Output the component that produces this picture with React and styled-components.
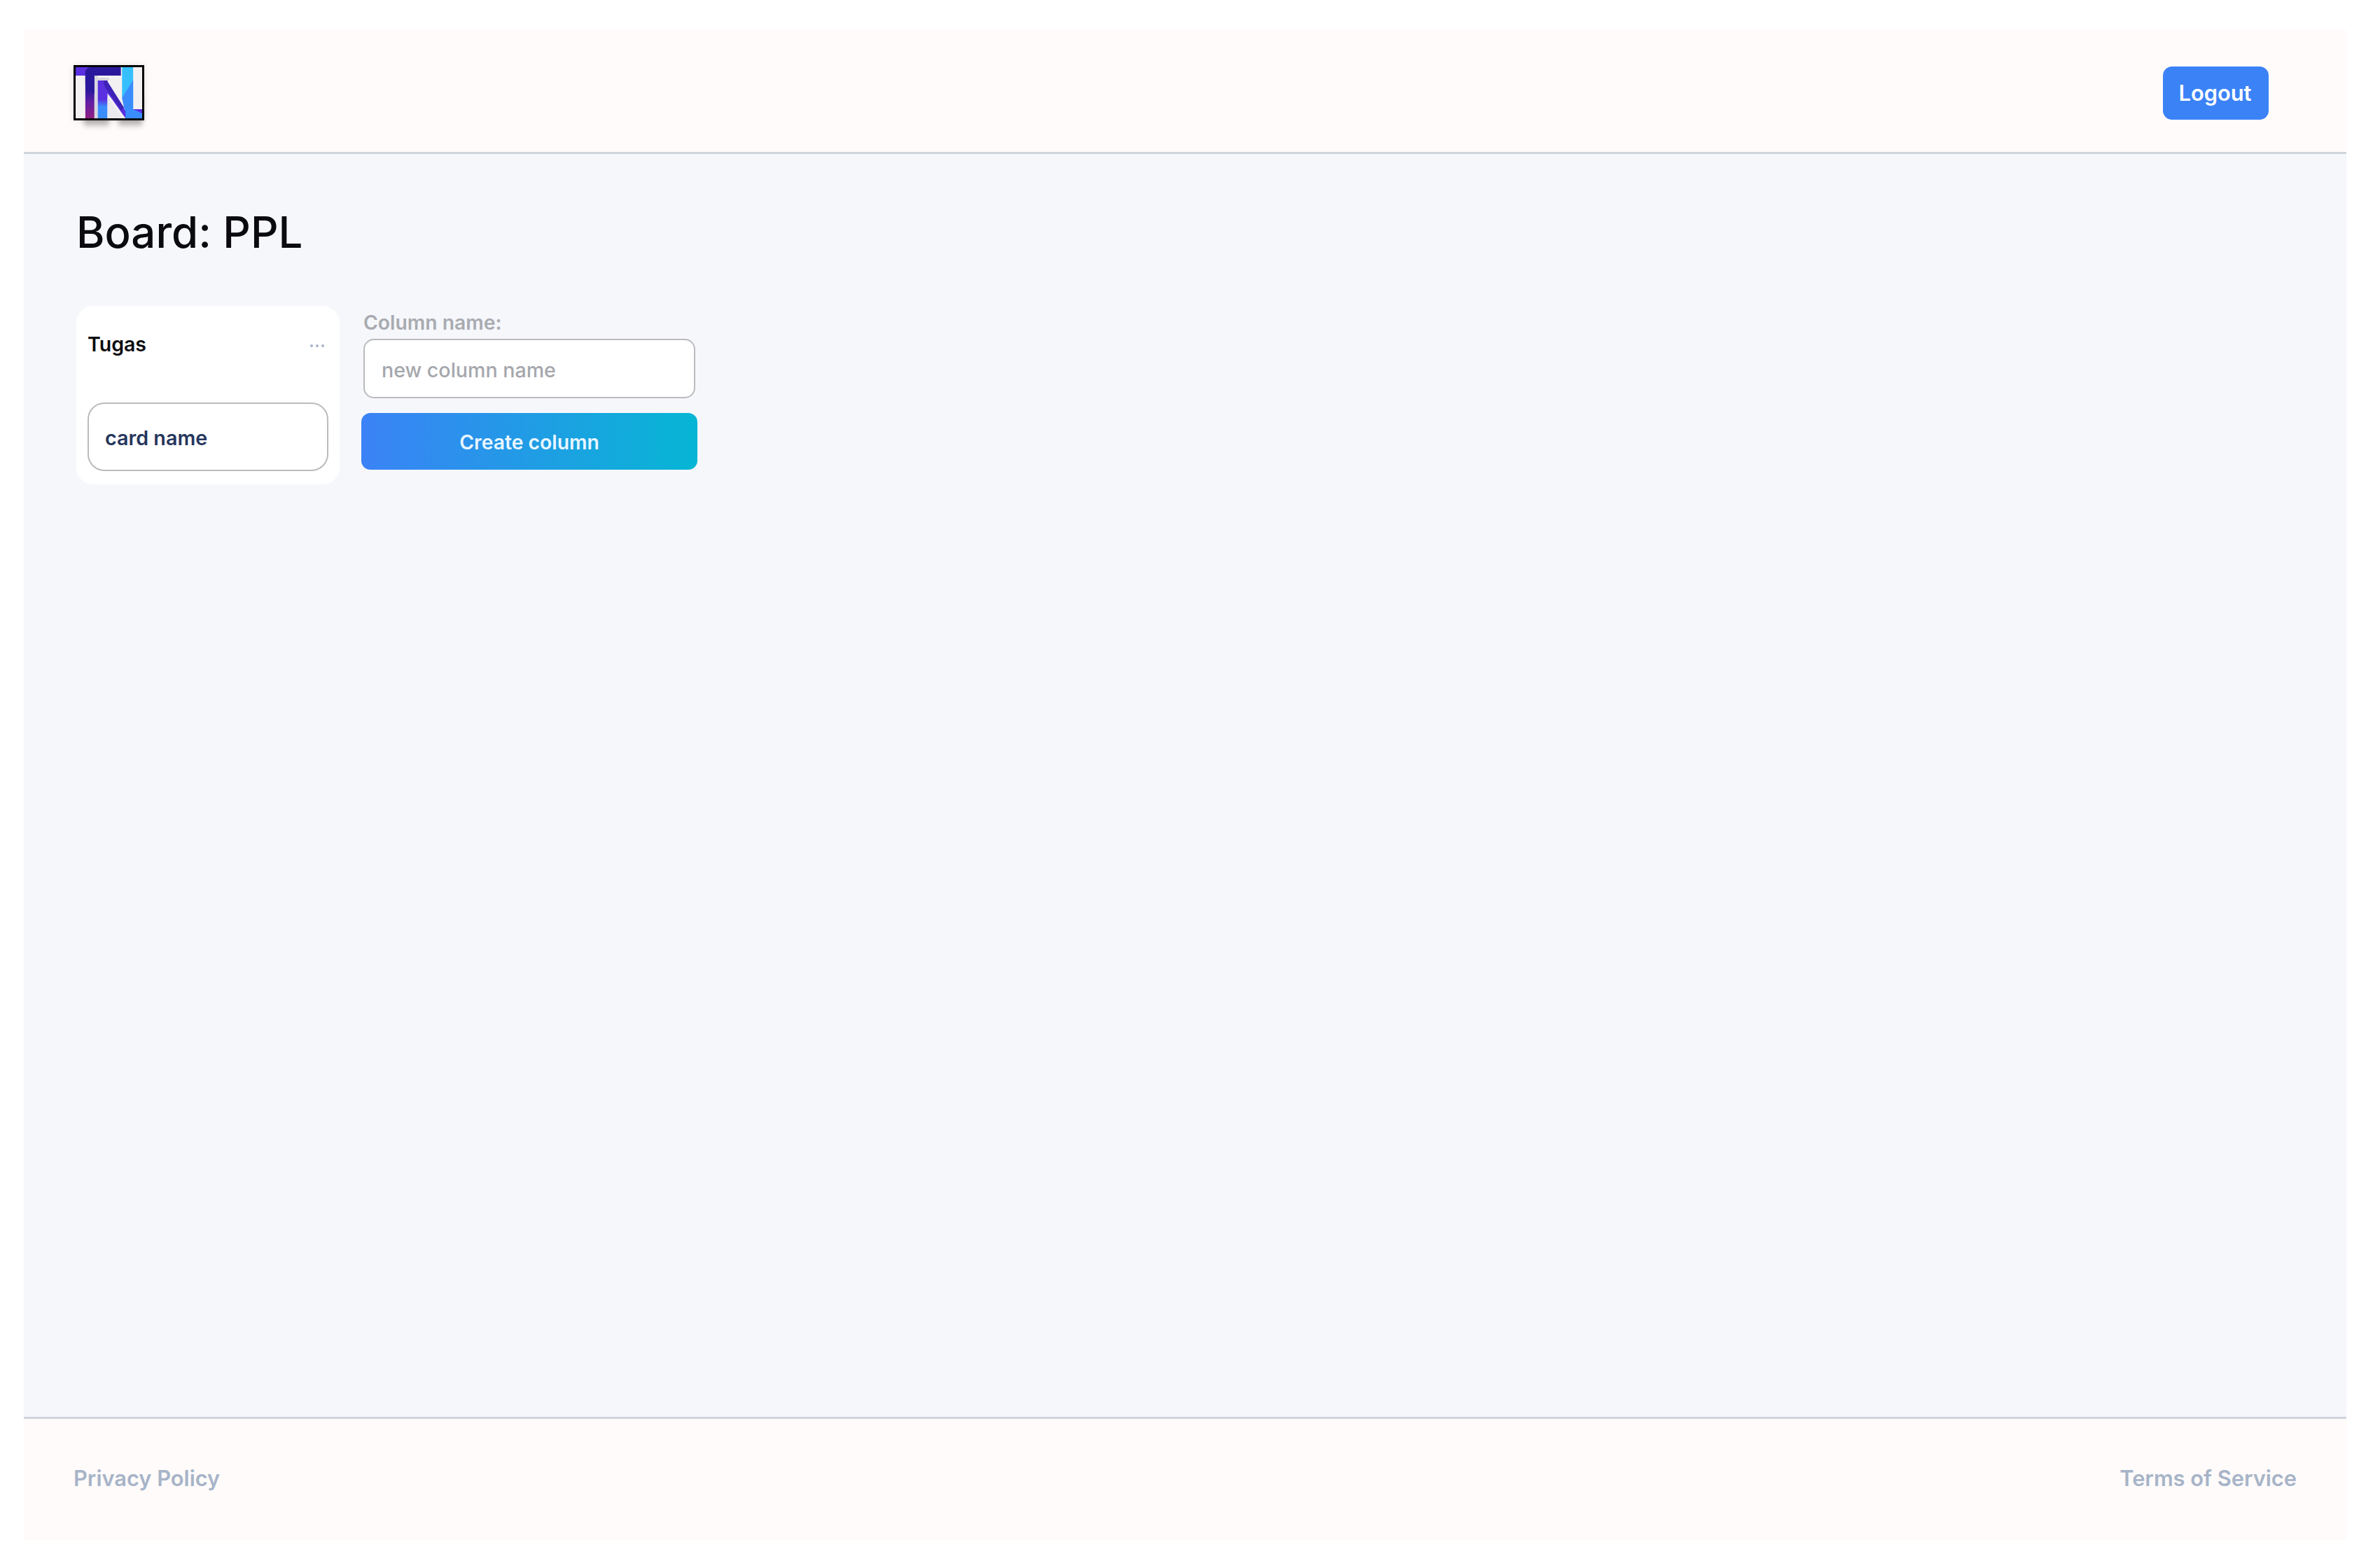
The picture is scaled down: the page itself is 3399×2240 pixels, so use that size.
import React from 'react'
import styled, { createGlobalStyle } from 'styled-components'

const Global = createGlobalStyle`
  html, body {
    margin: 0;
    background: #fff;
    font-family: Inter, "Liberation Sans", sans-serif;
  }
`

const Logo = () => (
  <LogoBox>
    <svg width="95" height="73" viewBox="0 0 96 73" preserveAspectRatio="none">
      <defs>
        <linearGradient id="stem" x1="0" y1="0" x2="0" y2="1">
          <stop offset="0" stopColor="#2a189c" />
          <stop offset="0.45" stopColor="#2a189c" />
          <stop offset="0.7" stopColor="#651ea4" />
          <stop offset="1" stopColor="#8e1f80" />
        </linearGradient>
        <linearGradient id="nleft" x1="0" y1="0" x2="0" y2="1">
          <stop offset="0" stopColor="#5a30e0" />
          <stop offset="0.5" stopColor="#5a30e0" />
          <stop offset="0.7" stopColor="#3a8dff" />
          <stop offset="1" stopColor="#3a8dff" />
        </linearGradient>
        <filter id="soft" x="-30%" y="-30%" width="160%" height="160%">
          <feGaussianBlur stdDeviation="4" />
        </filter>
      </defs>
      <g filter="url(#soft)" opacity="0.32" fill="#222" transform="translate(0 10)">
        <rect x="12" y="30" width="36" height="43" />
        <rect x="62" y="30" width="34" height="43" />
      </g>
      <rect width="96" height="73" fill="#f3f1f1" />
      <rect x="27" y="11" width="5" height="62" fill="#d9d6de" />
      <rect x="32" y="15" width="16" height="4" fill="#d9d6de" />
      <rect x="0" y="0" width="65" height="12" fill="#5a30e0" />
      <path d="M14 6 Q16 0 24 0 L65 0 L65 12 L27 12 L27 73 L14 73 Z" fill="url(#stem)" />
      <path d="M14 6 Q16 0 24 0 L65 0 L65 12 L27 12 L27 38 L14 24 Z" fill="#2a189c" />
      <path d="M67 0 L83 0 L83 60 L72 60 L67 44 Z" fill="#35bfff" />
      <path d="M83 18 L83 60 L72 68 L67 44 Z" fill="#3a8dff" />
      <path d="M32 19 L46 19 L46 73 L32 73 Z" fill="url(#nleft)" />
      <path d="M46 42 L46 73 L68 73 Z" fill="#ece9ee" />
      <path d="M32 19 L45 19 L72 63 L96 73 L72 73 L52 45 L40 30 Z" fill="#5a30e0" />
      <path d="M40 19 L45 19 L70 58 L66 62 L42 28 Z" fill="#3f22b8" />
      <path d="M72 60 L83 60 L96 60 L96 73 L72 73 Z" fill="#3a8dff" />
      <path d="M83 60 L96 60 L96 66 Z" fill="#5a30e0" />
    </svg>
  </LogoBox>
)

export default function App() {
  return (
    <>
      <Global />
      <Page>
        <Header>
          <Logo />
          <LogoutButton>Logout</LogoutButton>
        </Header>
        <Main>
          <Title>Board: PPL</Title>
          <Board>
            <Column>
              <ColumnHead>
                <ColumnName>Tugas</ColumnName>
                <Dots>
                  <i />
                  <i />
                  <i />
                </Dots>
              </ColumnHead>
              <Card>card name</Card>
            </Column>
            <NewColumn>
              <Label htmlFor="column-name">Column name:</Label>
              <NameInput id="column-name" placeholder="new column name" readOnly />
              <CreateButton>Create column</CreateButton>
            </NewColumn>
          </Board>
        </Main>
        <Footer>
          <FootLink>Privacy Policy</FootLink>
          <FootLink>Terms of Service</FootLink>
        </Footer>
      </Page>
    </>
  )
}

const Page = styled.div`
  display: flex;
  flex-direction: column;
  box-sizing: border-box;
  height: 2157px;
  margin: 43px 48px 40px 34px;
  background: #f5f7fb;
`

const Header = styled.header`
  display: flex;
  align-items: center;
  justify-content: space-between;
  box-sizing: border-box;
  height: 177px;
  padding: 5px 111px 0 71px;
  background: #fffbfa;
  border-bottom: 3px solid #d1d5db;
`

const LogoBox = styled.div`
  display: flex;
  border: 3px solid #000;
  box-shadow: 0 0 10px rgba(0, 0, 0, 0.1);
  svg {
    overflow: visible;
  }
`

const LogoutButton = styled.button`
  box-sizing: border-box;
  width: 151px;
  height: 76px;
  padding: 0 2px 0 0;
  border: 0;
  border-radius: 13px;
  background: #3b82f6;
  color: #fff;
  font: 600 30.8px Inter, "Liberation Sans", sans-serif;
`

const Main = styled.main`
  flex: 1;
  padding: 0 75px;
`

const Title = styled.h1`
  margin: 0;
  padding-top: 72px;
  font-size: 61.7px;
  line-height: 80px;
  font-weight: 500;
  color: #0b0b0f;
`

const Board = styled.div`
  display: flex;
  align-items: flex-start;
  gap: 31px;
  margin-top: 65px;
`

const Column = styled.section`
  box-sizing: border-box;
  width: 376px;
  height: 255px;
  padding: 0 16px;
  background: #fff;
  border-radius: 24px;
`

const ColumnHead = styled.div`
  display: flex;
  align-items: center;
  justify-content: space-between;
  height: 108px;
  padding-right: 6px;
  margin-bottom: 30px;
`

const ColumnName = styled.span`
  font-size: 28.5px;
  font-weight: 600;
  color: #0b0b0f;
`

const Dots = styled.span`
  display: flex;
  gap: 4px;
  margin-top: 6px;
  i {
    width: 4px;
    height: 4px;
    border-radius: 50%;
    background: #a9b4c8;
  }
`

const Card = styled.div`
  display: flex;
  align-items: center;
  box-sizing: border-box;
  height: 98px;
  padding: 2px 0 0 23px;
  border: 2.5px solid #bbbbbd;
  border-radius: 24px;
  background: #fff;
  color: #26365c;
  font-size: 28.7px;
  font-weight: 600;
`

const NewColumn = styled.form`
  display: flex;
  flex-direction: column;
  width: 480px;
  padding-top: 8px;
`

const Label = styled.label`
  margin: 0 2px 7px 3px;
  font-size: 28.3px;
  line-height: 32px;
  font-weight: 600;
  color: #a9abb0;
`

const NameInput = styled.input`
  box-sizing: border-box;
  width: 474px;
  height: 85px;
  margin: 0 0 21px 3px;
  padding: 3px 24px 0;
  border: 2.5px solid #bbbbbd;
  border-radius: 15px;
  background: #fff;
  font: 500 28.6px Inter, "Liberation Sans", sans-serif;
  outline: none;
  &::placeholder {
    color: #a5a7ad;
  }
`

const CreateButton = styled.button`
  height: 81px;
  padding: 2px 0 0;
  border: 0;
  border-radius: 13px;
  background: linear-gradient(90deg, #3b82f6, #06b6d4);
  color: #e8f6ff;
  font: 600 28.3px Inter, "Liberation Sans", sans-serif;
`

const Footer = styled.footer`
  display: flex;
  align-items: center;
  justify-content: space-between;
  box-sizing: border-box;
  height: 176px;
  padding: 0 71px 5px;
  background: #fffbfa;
  border-top: 3px solid #d1d5db;
`

const FootLink = styled.a`
  font-size: 30.8px;
  font-weight: 600;
  color: #a7b4c8;
`
